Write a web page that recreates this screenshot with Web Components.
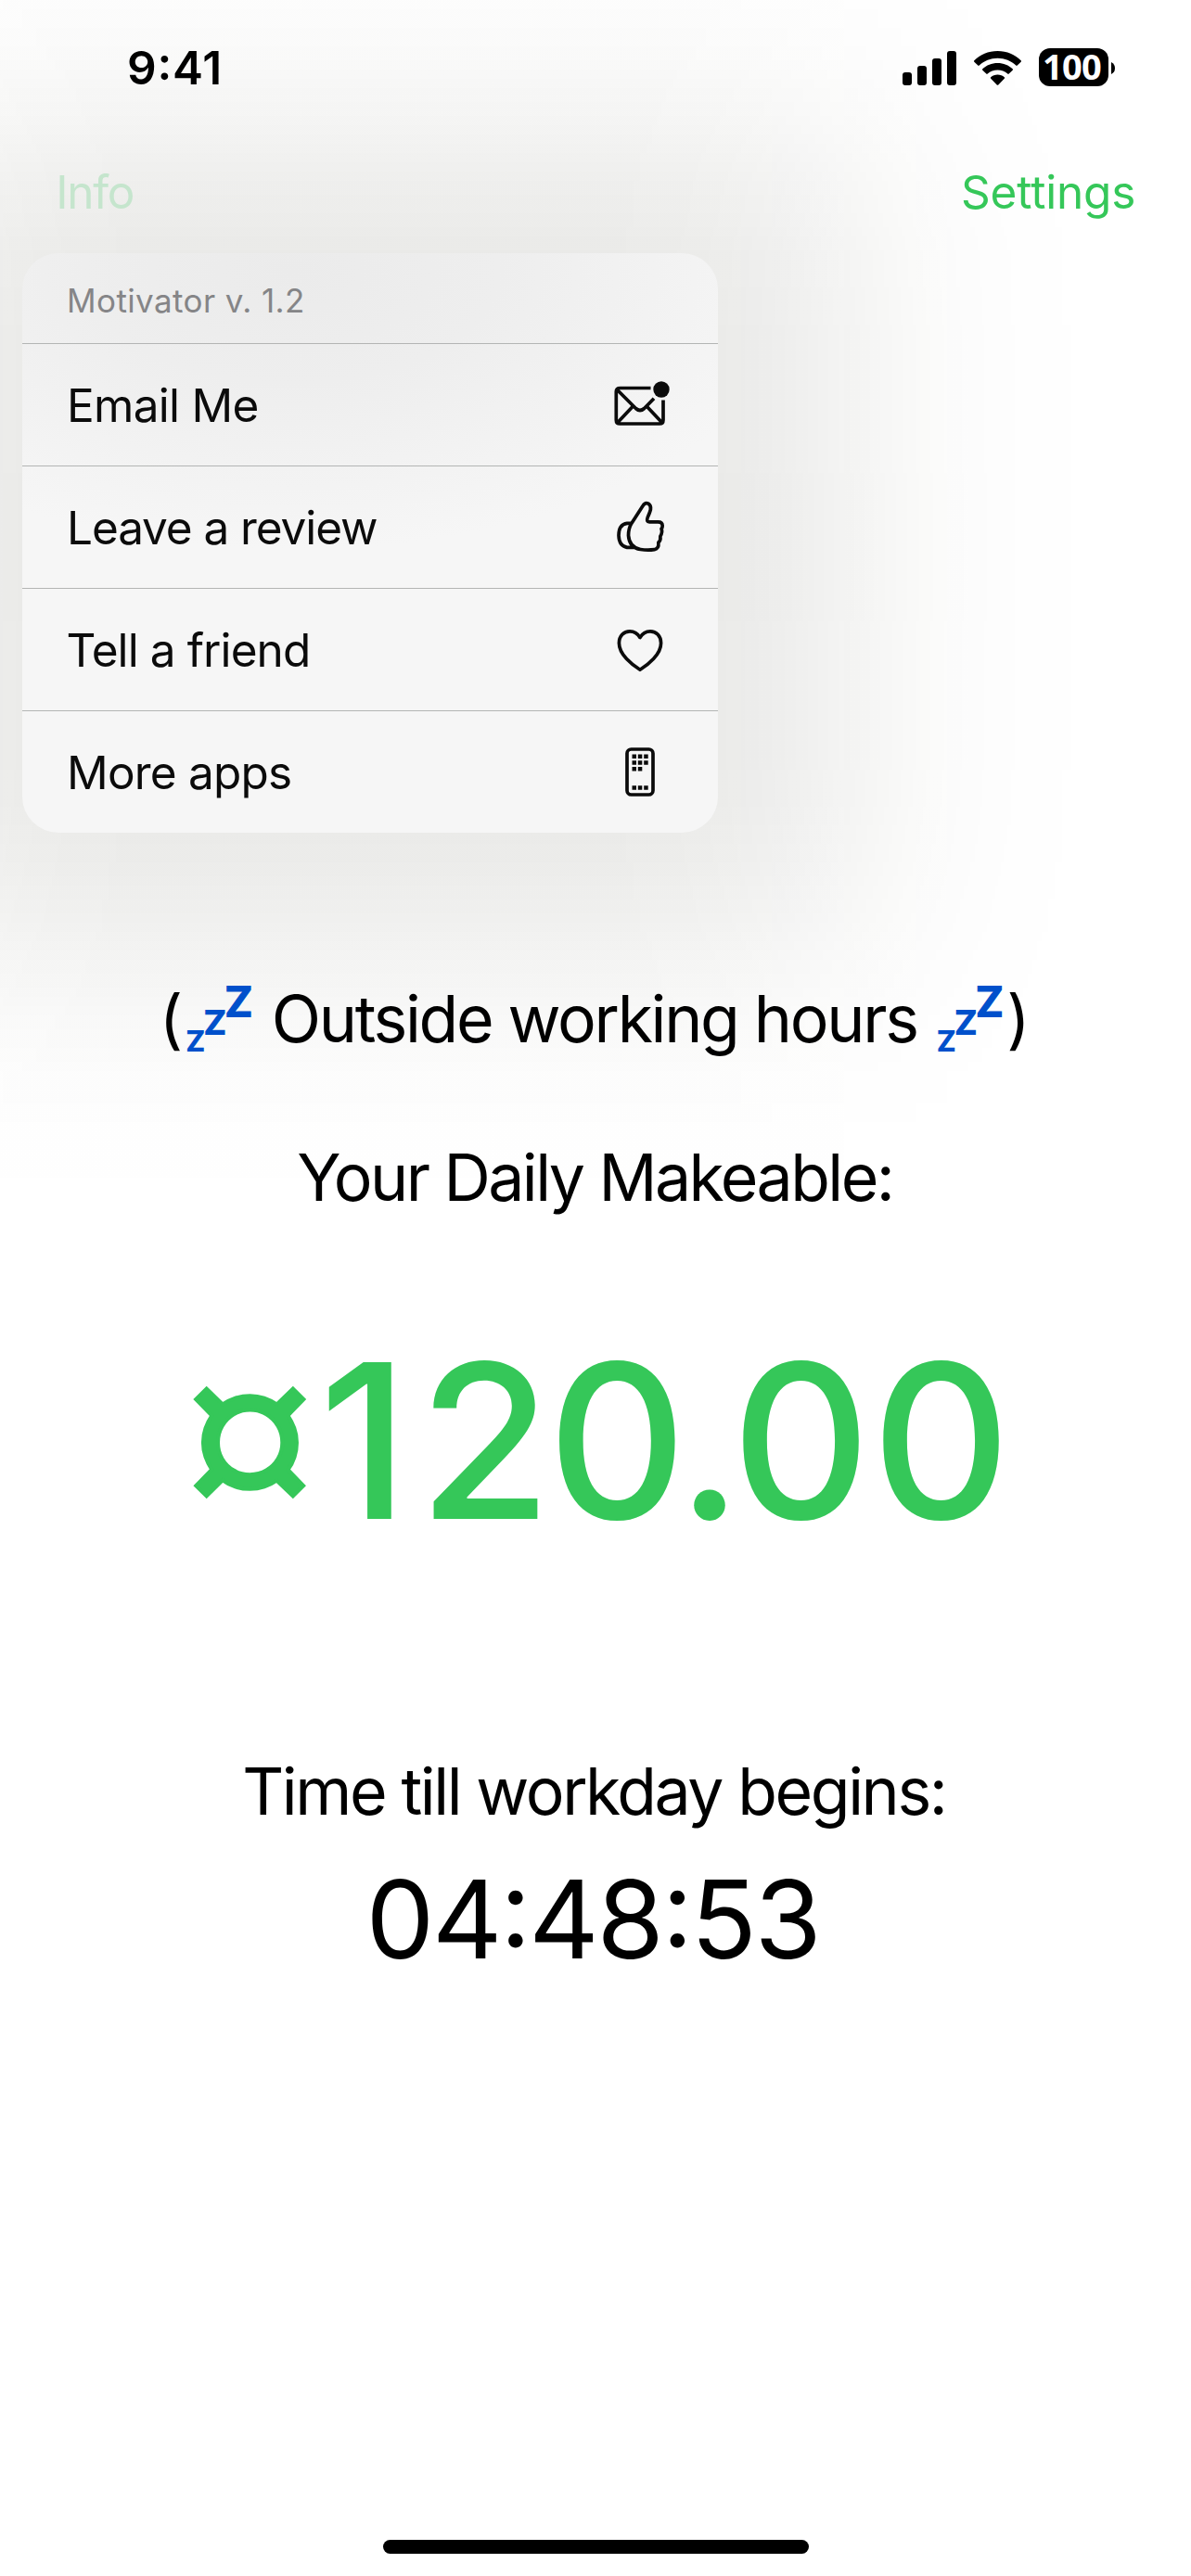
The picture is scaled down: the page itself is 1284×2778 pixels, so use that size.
<!DOCTYPE html>
<html lang="en">
<head>
<meta charset="utf-8">
<title>Motivator</title>
<style>
html,body{margin:0;padding:0;background:#fff}
body{width:1284px;height:2778px;overflow:hidden;font-family:Inter,"Liberation Sans",sans-serif;color:#000}
</style>
</head>
<body>
<motivator-app></motivator-app>
<script>
const meter=document.createElement('canvas').getContext('2d');

// Single line of text whose box is its ink: side bearings are trimmed and the
// tracking (or, with `scale`, the font size) is tuned so that the glyphs span
// exactly `width` pixels. Child elements may add their own tracking with `kern`.
class FitText extends HTMLElement{
  connectedCallback(){
    if(this.shadowRoot)return;
    const r=this.attachShadow({mode:'open'});
    r.innerHTML='<style>:host{display:block;flex:none;white-space:pre;line-height:.727;font-feature-settings:"calt" 1}span{display:inline-block}</style><span><slot></slot></span>';
    const s=r.querySelector('span'),w=+this.getAttribute('width'),text=this.textContent,n=[...text].length;
    const cs=getComputedStyle(this);
    let size=parseFloat(cs.fontSize);
    const measure=()=>{
      meter.font=`${cs.fontWeight} ${size}px ${cs.fontFamily}`;
      return meter.measureText(text);
    };
    let m=measure();
    let ink=m.actualBoundingBoxLeft+m.actualBoundingBoxRight;
    if(this.hasAttribute('scale')){
      size*=w/ink;
      this.style.fontSize=size.toFixed(1)+'px';
      m=measure();
      ink=m.actualBoundingBoxLeft+m.actualBoundingBoxRight;
    }
    this.style.width=w+'px';
    if(n>1){
      const t=(w-ink)/(n-1);
      s.style.letterSpacing=t.toFixed(3)+'px';
      for(const c of this.children)c.style.letterSpacing=(t+ +(c.getAttribute('kern')||0)).toFixed(3)+'px';
    }
    s.style.marginLeft=m.actualBoundingBoxLeft.toFixed(2)+'px';
    if(this.hasAttribute('mid')){
      const base=(m.fontBoundingBoxAscent-m.fontBoundingBoxDescent)/2;
      const rise=(m.actualBoundingBoxAscent-m.actualBoundingBoxDescent)/2;
      s.style.transform=`translateY(${(rise-base).toFixed(1)}px)`;
    }
  }
}
customElements.define('fit-text',FitText);

class StatusBar extends HTMLElement{
  constructor(){
    super();
    this.attachShadow({mode:'open'}).innerHTML=`
    <style>
    :host{display:flex;height:146px;justify-content:space-between;align-items:center;padding:0 82px 0 139px;box-sizing:border-box}
    .time{font-size:49.5px;font-weight:600;margin-bottom:1px}
    .right{display:flex;align-items:center}
    svg{display:block}
    .wifi{margin:0 19px}
    .bat{display:flex;align-items:center;justify-content:center;width:75px;height:41px;border-radius:12px;background:#000;color:#fff;font-family:"Open Sans","Noto Sans",sans-serif;font-size:38px;font-weight:700;margin-top:-1px}
    .bat fit-text{margin:1px 2px 0 0}
    .nub{margin-left:3px}
    </style>
    <fit-text class="time" width="97.2">9:41</fit-text>
    <div class="right">
      <svg width="58" height="37" viewBox="0 0 58 37"><rect y="23" width="10" height="14" rx="3"/><rect x="16" y="16" width="10" height="21" rx="3"/><rect x="32" y="8" width="10" height="29" rx="3"/><rect x="48" width="10" height="37" rx="3"/></svg>
      <svg class="wifi" width="51" height="37" viewBox="0 0 51 37"><path d="M25.500 0C35.500 0 44.300 3.900 50.700 10.300Q51.300 11 50.700 11.700L46.700 15.600Q46 16.200 45.300 15.600C40 10.500 33.200 7.700 25.500 7.700S11 10.500 5.700 15.600Q5 16.200 4.300 15.600L.3 11.700Q-.3 11 .3 10.300C6.700 3.900 15.500 0 25.500 0Z"/><path d="M25.500 12.900C31.800 12.900 37.500 15.300 41.700 19.300Q42.300 20 41.700 20.700L37.700 24.600Q37 25.200 36.300 24.600C33.400 22 29.600 20.500 25.500 20.500S17.600 22 14.700 24.600Q14 25.200 13.300 24.600L9.300 20.700Q8.700 20 9.300 19.300C13.500 15.300 19.200 12.900 25.500 12.900Z"/><path d="M25.500 25.600C28.300 25.600 30.900 26.600 32.800 28.300Q33.500 29 32.800 29.700L26.300 36.400Q25.500 37.200 24.700 36.400L18.200 29.700Q17.500 29 18.200 28.300C20.100 26.600 22.700 25.600 25.500 25.600Z"/></svg>
      <div class="bat"><fit-text mid width="61">100</fit-text></div>
      <svg class="nub" width="4" height="13" viewBox="0 0 4 13"><path d="M0 0Q4 2 4 6.500T0 13Z"/></svg>
    </div>`;
  }
}
customElements.define('status-bar',StatusBar);

class NavBar extends HTMLElement{
  constructor(){
    super();
    this.attachShadow({mode:'open'}).innerHTML=`
    <style>
    :host{display:flex;height:127px;align-items:center;justify-content:space-between;padding:0 61.700px 6px 64.300px;box-sizing:border-box;font-size:49.5px;color:#35c759}
    .dim{color:#c5e5cd}
    </style>
    <fit-text class="dim" width="79.4">Info</fit-text><fit-text width="184.3">Settings</fit-text>`;
  }
}
customElements.define('nav-bar',NavBar);

const ICONS={
  mail:'<path d="M61.500 28.500H28.500Q24.300 28.500 24.300 32.500V63Q24.300 67 28.500 67H71Q75 67 75 63V41.500M25.500 30.500L45.500 50.500Q50 54.500 54.500 50.500L65 39.700M26 65.500L42 48.500M73.500 65.500L57.500 48.500"/><circle cx="73" cy="30" r="8.700" fill="#0b0b0b" stroke="none"/>',
  thumb:'<path d="M40.800 44.400L53.200 25.300Q55.500 21.500 59 23.200Q62 25 61.400 29.500Q60.700 32.500 58.200 38Q56.500 42.800 60 42.800H69.500Q74 42.800 74.200 47Q74.200 49 73 50.300Q74.600 54 71.800 58.500Q72.600 62.500 69.800 65.200Q70.600 71.500 65.500 72.700Q58 73.800 50.500 72.500Q38.500 70.500 37.500 57.500Q37.500 50 40.800 44.400ZM40.500 44.300H36Q27 45.500 27 57.500Q27.500 69 36 70.300H44"/>',
  heart:'<path d="M50 72.300C58.500 67 72.600 56 72.600 43.500C72.600 36 67.500 30.800 61 30.800C56 30.800 52.300 33.500 50 37.500C47.700 33.500 44 30.800 39 30.800C32.500 30.800 27.400 36 27.400 43.500C27.400 56 41.500 67 50 72.300Z"/>',
  phone:'<rect x="36" y="28" width="28" height="49" rx="4.500"/><g fill="#0b0b0b" stroke="none"><path d="M41.500 33.500h4.500v4.500h-4.500zm6.300 0h4.500v4.500h-4.500zm6.400 0h4.500v4.500h-4.500zM41.500 40.300h4.500v4.500h-4.500zm6.300 0h4.500v4.500h-4.500zm6.400 0h4.500v4.500h-4.500zM41.500 47.100h4.500v4.500h-4.500zm6.300 0h4.500v4.500h-4.500zM41.500 67.200h4.500v4.500h-4.500zm6.300 0h4.500v4.500h-4.500zm6.400 0h4.500v4.500h-4.500z"/></g>'
};
class MenuRow extends HTMLElement{
  connectedCallback(){
    if(this.shadowRoot)return;
    this.attachShadow({mode:'open'}).innerHTML=`
    <style>
    :host{display:flex;align-items:center;justify-content:space-between;height:132px;box-sizing:border-box;border-top:1px solid #b3b5b4;padding:0 34px 0 ${this.getAttribute('x')}px;font-size:49.5px;color:#0b0b0b}
    svg{display:block;fill:none;stroke:#0b0b0b;stroke-width:3.700;stroke-linejoin:round;stroke-linecap:butt}
    </style>
    <fit-text width="${this.getAttribute('w')}">${this.getAttribute('label')}</fit-text>
    <svg width="100" height="100" viewBox="0 ${this.getAttribute('oy')||0} 100 100">${ICONS[this.getAttribute('icon')]}</svg>`;
  }
}
customElements.define('menu-row',MenuRow);

class PopMenu extends HTMLElement{
  constructor(){
    super();
    this.attachShadow({mode:'open'}).innerHTML=`
    <style>
    :host{display:flex;flex-direction:column;width:750px;height:625px;margin-left:24px;border-radius:39px;background:radial-gradient(ellipse 560px 300px at 290px 20px,#ebebeb 0,#eeeeee 40%,#f6f6f6 100%)}
    .head{display:flex;align-items:center;height:97px;padding:7px 0 0 51px;box-sizing:border-box;font-size:35px;color:#858587}
    </style>
    <div class="head"><fit-text width="251">Motivator v. 1.2</fit-text></div>
    <menu-row icon="mail" label="Email Me" x="52" w="201.500" oy="-3"></menu-row>
    <menu-row icon="thumb" label="Leave a review" x="52" w="330" oy="-1"></menu-row>
    <menu-row icon="heart" label="Tell a friend" x="49.500" w="258.400" oy="1"></menu-row>
    <menu-row icon="phone" label="More apps" x="52" w="237" oy="3"></menu-row>`;
  }
}
customElements.define('pop-menu',PopMenu);

class SleepSign extends HTMLElement{
  constructor(){
    super();
    this.attachShadow({mode:'open'}).innerHTML=`
    <style>
    :host{display:flex;flex:none;align-items:flex-start;width:71px;height:71px;color:#0050cb;font-weight:800}
    .s{font-size:31px;margin:48px 1.500px 0 0}.m{font-size:37px;margin:26px 1px 0 0}.l{font-size:46px}
    </style>
    <fit-text class="s" width="17.500">Z</fit-text><fit-text class="m" width="22.500">Z</fit-text><fit-text class="l" width="27.500">Z</fit-text>`;
  }
}
customElements.define('sleep-sign',SleepSign);

class EarningsPanel extends HTMLElement{
  constructor(){
    super();
    this.attachShadow({mode:'open'}).innerHTML=`
    <style>
    :host{display:flex;flex-direction:column;align-items:center;padding:151px 3px 0 0;font-size:69.75px}
    .line{display:flex;height:100px;align-items:center}
    .status{align-self:flex-start;padding-left:178.700px}
    .open{margin-right:7.500px}
    .phrase{margin:0 22.500px 0 24.500px}
    .close{margin-left:6.500px}
    .amount{display:flex;align-self:flex-start;align-items:center;height:240px;margin-top:114px;padding-left:208px;gap:25.400px;font-size:232.5px;font-weight:500;color:#35c759}
    .amount i{font-style:normal}
    .sign{font-family:"Open Sans","Noto Sans",sans-serif;font-size:260px;font-weight:400;-webkit-text-stroke:4px #35c759}
    .till{margin-top:208px}
    .clock{font-size:117px;height:130px;margin-top:23px}
    .clock fit-text{margin-right:1px}
    .daily{margin-top:71px}
    </style>
    <div class="line status"><fit-text class="open" width="15">(</fit-text><sleep-sign></sleep-sign><fit-text class="phrase" width="691.500">Outside working hours</fit-text><sleep-sign></sleep-sign><fit-text class="close" width="15.500">)</fit-text></div>
    <div class="line daily"><fit-text width="638.500">Your Daily Makeable:</fit-text></div>
    <div class="amount"><fit-text class="sign" mid scale width="120.500">¤</fit-text><fit-text width="725"><i kern="11">1</i><i kern="-4">2</i><i kern="-10.500">0</i><i kern="-11.500">.</i><i kern="1">0</i><i>0</i></fit-text></div>
    <div class="line till"><fit-text width="752.500">Time till workday begins:</fit-text></div>
    <div class="line clock"><fit-text width="479">04:48:53</fit-text></div>`;
  }
}
customElements.define('earnings-panel',EarningsPanel);

class HomeBar extends HTMLElement{
  constructor(){
    super();
    this.attachShadow({mode:'open'}).innerHTML='<style>:host{display:block;width:459px;height:15px;border-radius:8px;background:#000;margin:auto auto 24px 413px}</style>';
  }
}
customElements.define('home-bar',HomeBar);

// Soft shadow cast by the menu: a rectangle with gaussian edges, as a vertical
// gradient masked by a horizontal one.
const SIGMA=115;
const edge=z=>1/(1+Math.exp(-1.5976*z-.07056*z*z*z));
function ramp(dir,a,b,end,color){
  const stops=[];
  for(let p=0;p<=end;p+=20)stops.push(`rgba(${color},${(edge((p-a)/SIGMA)*edge((b-p)/SIGMA)*(color==='0,0,0'?1:.104)).toFixed(5)}) ${p}px`);
  return `linear-gradient(${dir},${stops.join(',')})`;
}
class MenuShadow extends HTMLElement{
  constructor(){
    super();
    const mask=ramp('to right',-109,910,1284,'0,0,0');
    this.attachShadow({mode:'open'}).innerHTML=`
    <style>:host{display:block;position:absolute;inset:0 0 auto 0;height:1440px;z-index:-1;background:${ramp('to bottom',140,1031,1440,'30,30,10')};-webkit-mask-image:${mask};mask-image:${mask}}</style>`;
  }
}
customElements.define('menu-shadow',MenuShadow);

class MotivatorApp extends HTMLElement{
  constructor(){
    super();
    this.attachShadow({mode:'open'}).innerHTML=`
    <style>:host{display:flex;position:relative;z-index:0;flex-direction:column;width:1284px;height:2778px;overflow:hidden;background:#fff}</style>
    <menu-shadow></menu-shadow><status-bar></status-bar><nav-bar></nav-bar><pop-menu></pop-menu><earnings-panel></earnings-panel><home-bar></home-bar>`;
  }
}
customElements.define('motivator-app',MotivatorApp);
</script>
</body>
</html>
